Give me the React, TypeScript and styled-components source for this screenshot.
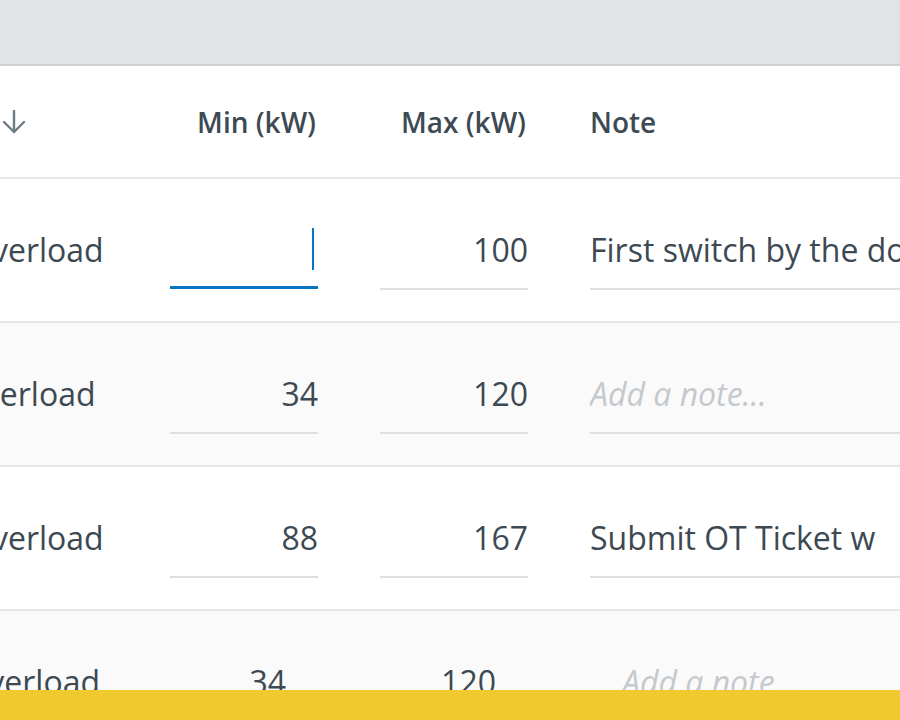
import { useLayoutEffect, useRef } from "react"
import styled, { createGlobalStyle } from "styled-components"

const GlobalStyle = createGlobalStyle`
    html, body {
        margin: 0;
        padding: 0;
    }
    body {
        font-family: "Open Sans", "Noto Sans", sans-serif;
        color: #3c4952;
        background: #ffffff;
    }
    * {
        box-sizing: border-box;
    }
`

const Page = styled.div`
    height: 100vh;
    display: flex;
    flex-direction: column;
    overflow: hidden;
`

const TopBar = styled.div`
    flex: none;
    height: 66px;
    background: #e1e4e6;
    border-bottom: 2px solid #cdd1d4;
`

const TableViewport = styled.div`
    flex: 1;
    min-height: 0;
    overflow: hidden;
`

const Table = styled.div`
    width: 1184px;
`

const columns = "241px 148px 148px 420px"

const HeaderRow = styled.div`
    display: grid;
    grid-template-columns: ${columns};
    column-gap: 62px;
    align-items: center;
    height: 113px;
    padding: 0 24px 0 17px;
    border-bottom: 2px solid #e6e6e6;
`

const HeaderCell = styled.div<{ $align?: "left" | "right" }>`
    display: flex;
    align-items: center;
    justify-content: ${p => p.$align === "right" ? "flex-end" : "flex-start"};
    gap: 3px;
    padding-right: ${p => p.$align === "right" ? "2px" : "0"};
    font-size: 28px;
    font-weight: 600;
    color: #3d4a53;
    white-space: nowrap;
`

const SortIcon = styled.svg`
    flex: none;
    width: 24px;
    height: 24px;
`

const Row = styled.div<{ $shaded?: boolean }>`
    display: grid;
    grid-template-columns: ${columns};
    column-gap: 62px;
    align-items: start;
    padding: 49px 24px 31px 17px;
    background: ${p => p.$shaded ? "#fafafa" : "#ffffff"};
    border-bottom: 2px solid #e6e6e6;
`

const NameCell = styled.div`
    font-size: 32px;
    line-height: 44px;
    white-space: nowrap;
    color: #3c4952;
`

const FieldBox = styled.label<{ $focused?: boolean }>`
    position: relative;
    display: block;
    padding-bottom: ${p => p.$focused ? "14px" : "16px"};
    border-bottom: ${p => p.$focused ? "3px solid #0a74c4" : "2px solid #dedfe0"};

    ${p => p.$focused && `
        &::after {
            content: "";
            position: absolute;
            top: 0;
            right: 4px;
            width: 2px;
            height: 42px;
            background: #0a74c4;
        }
    `}
`

const FieldInput = styled.input<{ $align: "left" | "right"; $inset?: boolean }>`
    display: block;
    width: 100%;
    height: 44px;
    margin: 0;
    padding: 0;
    ${p => p.$inset && (p.$align === "right" ? "padding-right: 32px;" : "padding-left: 32px;")}
    border: none;
    outline: none;
    background: transparent;
    font-family: inherit;
    font-size: 32px;
    line-height: 44px;
    color: #3c4952;
    caret-color: transparent;
    text-align: ${p => p.$align};

    &::placeholder {
        font-style: italic;
        color: #c5c9cd;
        opacity: 1;
    }
`

const Footer = styled.div`
    flex: none;
    height: 30px;
    background: #f0c92e;
`

interface Limit {
    name: string
    min: string
    max: string
    note: string
    focused?: boolean
    draft?: boolean
}

const limits: Limit[] = [
    { name: "Motor Overload", min: "", max: "100", note: "First switch by the door, then the breaker panel", focused: true },
    { name: "Cable Overload", min: "34", max: "120", note: "" },
    { name: "Motor Overload", min: "88", max: "167", note: "Submit OT Ticket w" },
    { name: "Pump Overload", min: "34", max: "120", note: "", draft: true },
]

const Field = ({ value, align, focused, inset, placeholder }: {
    value: string, align: "left" | "right", focused?: boolean, inset?: boolean, placeholder?: string
}) =>
    <FieldBox $focused={focused}>
        <FieldInput $align={align} $inset={inset} defaultValue={value} placeholder={placeholder} />
    </FieldBox>

const App = () => {
    const viewport = useRef<HTMLDivElement>(null)

    // table is scrolled sideways, the first column is partly out of view
    useLayoutEffect(() => {
        if (viewport.current) viewport.current.scrollLeft = 150
    }, [])

    return (
        <Page>
            <GlobalStyle />
            <TopBar />
            <TableViewport ref={viewport}>
                <Table>
                    <HeaderRow>
                        <HeaderCell>
                            Condition
                            <SortIcon viewBox="0 0 24 24" fill="none" stroke="#6e7b83" strokeWidth="2.4" strokeLinecap="round" strokeLinejoin="round">
                                <path d="M12 1v21" />
                                <path d="M2 12l10 10 10-10" />
                            </SortIcon>
                        </HeaderCell>
                        <HeaderCell $align="right">Min (kW)</HeaderCell>
                        <HeaderCell $align="right">Max (kW)</HeaderCell>
                        <HeaderCell>Note</HeaderCell>
                    </HeaderRow>
                    {limits.map((l, i) =>
                        <Row key={i} $shaded={i % 2 === 1}>
                            <NameCell>{l.name}</NameCell>
                            <Field value={l.min} align="right" focused={l.focused} inset={l.draft} />
                            <Field value={l.max} align="right" inset={l.draft} />
                            <Field value={l.note} align="left" inset={l.draft} placeholder="Add a note..." />
                        </Row>
                    )}
                </Table>
            </TableViewport>
            <Footer />
        </Page>
    )
}

export default App
